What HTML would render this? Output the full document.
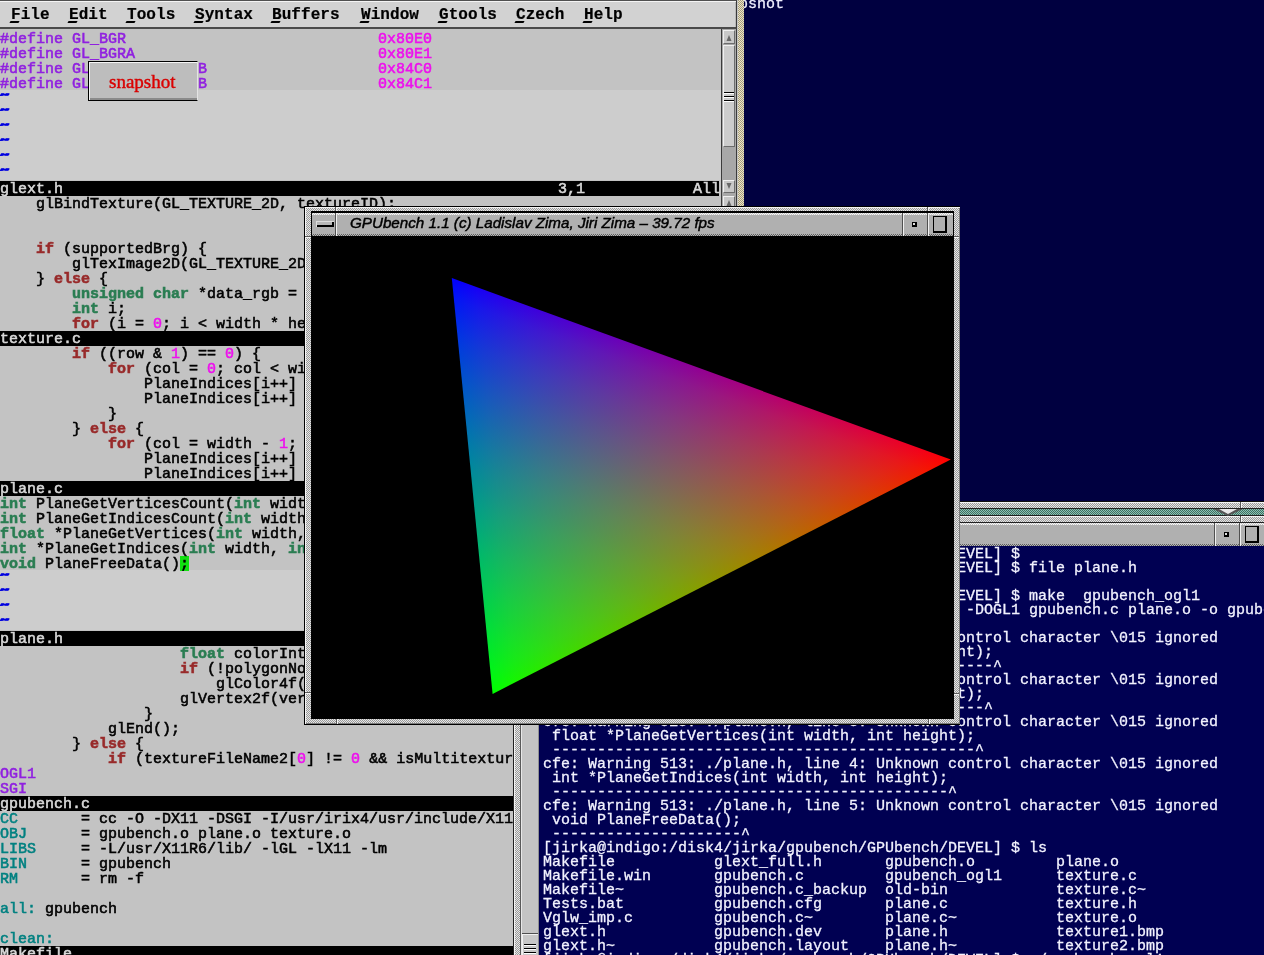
<!DOCTYPE html>
<html><head><meta charset="utf-8">
<style>
*{margin:0;padding:0;box-sizing:border-box}
html,body{width:1264px;height:955px;overflow:hidden}
body{position:relative;background:#000040;font-family:"Liberation Mono",monospace}
.abs{position:absolute}
/* stipple patterns */
.stg{background:repeating-conic-gradient(#e6e6e6 0 25%,#9a9a9a 0 50%) 0 0/2px 2px}
.stb{background:repeating-conic-gradient(#ece4c4 0 25%,#a49c80 0 50%) 0 0/2px 2px}
.stgr{background:repeating-conic-gradient(#8cc0b4 0 25%,#3d7060 0 50%) 0 0/2px 2px}
/* gvim */
#gvim{left:0;top:0;width:744px;height:955px;background:#c3c3c3;overflow:hidden}
#menubar{left:0;top:0;width:737px;height:29px;background:#d2d2d2;border-top:1px solid #505050;box-shadow:inset 0 1px 0 #f4f4f4,inset -1px 0 0 #b8b8b8;border-bottom:2px solid #4a4a4a;border-right:1px solid #3a3a3a}
.mi{position:absolute;top:4px;font:bold 16px/20px "Liberation Mono",monospace;color:#000;white-space:nowrap;-webkit-text-stroke:0.2px #000}
.mi i{display:inline-block;width:9.66px;text-align:center;font-style:normal;position:relative;top:0}
.mi .ul{position:absolute;left:-1px;top:16px;width:9px;height:2px;background:#000;transform:skewX(-30deg)}
.lb{position:absolute;left:0;width:721px;height:15px}
.ln{position:absolute;left:0;height:15px;font:15px/15px "Liberation Mono",monospace;white-space:pre;-webkit-text-stroke:0.55px currentColor}
.sb{position:absolute;left:721px;width:16px;background:#a8a8a8;border-left:1px solid #3c3c3c;border-right:1px solid #3c3c3c}
.btn{position:absolute;left:1px;width:12px;background:#c8c8c8;border-top:1px solid #f0f0f0;border-left:1px solid #f0f0f0;border-bottom:1px solid #6c6c6c;border-right:1px solid #6c6c6c}
.tb{background:repeating-conic-gradient(#f6f6f6 0 25%,#c4c4c4 0 50%) left top/2px 2px repeat-x,repeating-conic-gradient(#5c5c5c 0 25%,#b8b8b8 0 50%) left bottom/2px 2px repeat-x,#b0b0b0}
/* terminal */
#term{left:513px;top:501px;width:760px;height:460px}
.tt{position:absolute;left:543px;top:548px;font:15px/14px "Liberation Mono",monospace;color:#f2f2ff;white-space:pre;-webkit-text-stroke:0.3px currentColor}
</style></head><body>

<!-- desktop text behind -->
<div class="abs" style="left:712px;top:-2px;font:15px/14px 'Liberation Mono';color:#f0f0ff;white-space:pre;-webkit-text-stroke:0.3px currentColor">snapshot</div>

<!-- ================= GVIM ================= -->
<div id="gvim" class="abs">
  <div id="menubar" class="abs">
    <span class="mi" style="left:11px"><i>F</i><i>i</i><i>l</i><i>e</i><b class="ul"></b></span>
    <span class="mi" style="left:69px"><i>E</i><i>d</i><i>i</i><i>t</i><b class="ul"></b></span>
    <span class="mi" style="left:127px"><i>T</i><i>o</i><i>o</i><i>l</i><i>s</i><b class="ul"></b></span>
    <span class="mi" style="left:195px"><i>S</i><i>y</i><i>n</i><i>t</i><i>a</i><i>x</i><b class="ul"></b></span>
    <span class="mi" style="left:272px"><i>B</i><i>u</i><i>f</i><i>f</i><i>e</i><i>r</i><i>s</i><b class="ul"></b></span>
    <span class="mi" style="left:361px"><i>W</i><i>i</i><i>n</i><i>d</i><i>o</i><i>w</i><b class="ul"></b></span>
    <span class="mi" style="left:439px"><i>G</i><i>t</i><i>o</i><i>o</i><i>l</i><i>s</i><b class="ul"></b></span>
    <span class="mi" style="left:516px"><i>C</i><i>z</i><i>e</i><i>c</i><i>h</i><b class="ul"></b></span>
    <span class="mi" style="left:584px"><i>H</i><i>e</i><i>l</i><i>p</i><b class="ul"></b></span>
  </div>
  <div class="abs" style="left:0;top:29px;width:721px;height:1px;background:#c3c3c3"></div>
<div class="lb" style="top:30px;width:721px;background:#c3c3c3"></div>
<div class="lb" style="top:45px;width:721px;background:#c3c3c3"></div>
<div class="lb" style="top:60px;width:721px;background:#c3c3c3"></div>
<div class="lb" style="top:75px;width:721px;background:#c3c3c3"></div>
<div class="lb" style="top:90px;width:721px;background:#cdcdcd"></div>
<div class="lb" style="top:105px;width:721px;background:#cdcdcd"></div>
<div class="lb" style="top:120px;width:721px;background:#cdcdcd"></div>
<div class="lb" style="top:135px;width:721px;background:#cdcdcd"></div>
<div class="lb" style="top:150px;width:721px;background:#cdcdcd"></div>
<div class="lb" style="top:165px;width:721px;background:#cdcdcd"></div>
<div class="lb" style="top:195px;width:721px;background:#c3c3c3"></div>
<div class="lb" style="top:210px;width:721px;background:#c3c3c3"></div>
<div class="lb" style="top:225px;width:721px;background:#c3c3c3"></div>
<div class="lb" style="top:240px;width:721px;background:#c3c3c3"></div>
<div class="lb" style="top:255px;width:721px;background:#c3c3c3"></div>
<div class="lb" style="top:270px;width:721px;background:#c3c3c3"></div>
<div class="lb" style="top:285px;width:721px;background:#c3c3c3"></div>
<div class="lb" style="top:300px;width:721px;background:#c3c3c3"></div>
<div class="lb" style="top:315px;width:721px;background:#c3c3c3"></div>
<div class="lb" style="top:345px;width:721px;background:#c3c3c3"></div>
<div class="lb" style="top:360px;width:721px;background:#c3c3c3"></div>
<div class="lb" style="top:375px;width:721px;background:#c3c3c3"></div>
<div class="lb" style="top:390px;width:721px;background:#c3c3c3"></div>
<div class="lb" style="top:405px;width:721px;background:#c3c3c3"></div>
<div class="lb" style="top:420px;width:721px;background:#c3c3c3"></div>
<div class="lb" style="top:435px;width:721px;background:#c3c3c3"></div>
<div class="lb" style="top:450px;width:721px;background:#c3c3c3"></div>
<div class="lb" style="top:465px;width:721px;background:#c3c3c3"></div>
<div class="lb" style="top:495px;width:721px;background:#c3c3c3"></div>
<div class="lb" style="top:510px;width:721px;background:#c3c3c3"></div>
<div class="lb" style="top:525px;width:721px;background:#c3c3c3"></div>
<div class="lb" style="top:540px;width:721px;background:#c3c3c3"></div>
<div class="lb" style="top:555px;width:721px;background:#c3c3c3"></div>
<div class="lb" style="top:570px;width:721px;background:#cdcdcd"></div>
<div class="lb" style="top:585px;width:721px;background:#cdcdcd"></div>
<div class="lb" style="top:600px;width:721px;background:#cdcdcd"></div>
<div class="lb" style="top:615px;width:721px;background:#cdcdcd"></div>
<div class="lb" style="top:645px;width:721px;background:#c3c3c3"></div>
<div class="lb" style="top:660px;width:721px;background:#c3c3c3"></div>
<div class="lb" style="top:675px;width:721px;background:#c3c3c3"></div>
<div class="lb" style="top:690px;width:721px;background:#c3c3c3"></div>
<div class="lb" style="top:705px;width:721px;background:#c3c3c3"></div>
<div class="lb" style="top:720px;width:721px;background:#c3c3c3"></div>
<div class="lb" style="top:735px;width:721px;background:#c3c3c3"></div>
<div class="lb" style="top:750px;width:721px;background:#c3c3c3"></div>
<div class="lb" style="top:765px;width:721px;background:#c3c3c3"></div>
<div class="lb" style="top:780px;width:721px;background:#c3c3c3"></div>
<div class="lb" style="top:810px;width:721px;background:#c3c3c3"></div>
<div class="lb" style="top:825px;width:721px;background:#c3c3c3"></div>
<div class="lb" style="top:840px;width:721px;background:#c3c3c3"></div>
<div class="lb" style="top:855px;width:721px;background:#c3c3c3"></div>
<div class="lb" style="top:870px;width:721px;background:#c3c3c3"></div>
<div class="lb" style="top:885px;width:721px;background:#c3c3c3"></div>
<div class="lb" style="top:900px;width:721px;background:#c3c3c3"></div>
<div class="lb" style="top:915px;width:721px;background:#c3c3c3"></div>
<div class="lb" style="top:930px;width:721px;background:#c3c3c3"></div>
<div class="abs" style="left:180px;top:556px;width:9px;height:15px;background:#11e011"></div>
<div class="lb" style="top:181px;width:719px;background:#000000"></div>
<div class="lb" style="top:331px;width:719px;background:#000000"></div>
<div class="lb" style="top:481px;width:719px;background:#000000"></div>
<div class="lb" style="top:631px;width:719px;background:#000000"></div>
<div class="lb" style="top:796px;width:719px;background:#000000"></div>
<div class="lb" style="top:946px;width:719px;background:#000000"></div>
<div class="ln" style="top:32px;color:#000"><span style="color:#9020e0">#define GL_BGR</span>                            <span style="color:#ee10ee">0x80E0</span></div>
<div class="ln" style="top:47px;color:#000"><span style="color:#9020e0">#define GL_BGRA</span>                           <span style="color:#ee10ee">0x80E1</span></div>
<div class="ln" style="top:62px;color:#000"><span style="color:#9020e0">#define GL_TEXTURE0_ARB</span>                   <span style="color:#ee10ee">0x84C0</span></div>
<div class="ln" style="top:77px;color:#000"><span style="color:#9020e0">#define GL_TEXTURE1_ARB</span>                   <span style="color:#ee10ee">0x84C1</span></div>
<svg width="10" height="15" style="position:absolute;left:0;top:90px"><path d="M0.5 5.5 L1.5 3.8 L4 3.8 L5 4.8 L6 3.8 L9 3.8 L8 5.2 L5 5.2 L4 4.4 L3 5.2 Z" fill="#0000e0" stroke="#0000e0" stroke-width="1.2" stroke-linejoin="round"/></svg>
<svg width="10" height="15" style="position:absolute;left:0;top:105px"><path d="M0.5 5.5 L1.5 3.8 L4 3.8 L5 4.8 L6 3.8 L9 3.8 L8 5.2 L5 5.2 L4 4.4 L3 5.2 Z" fill="#0000e0" stroke="#0000e0" stroke-width="1.2" stroke-linejoin="round"/></svg>
<svg width="10" height="15" style="position:absolute;left:0;top:120px"><path d="M0.5 5.5 L1.5 3.8 L4 3.8 L5 4.8 L6 3.8 L9 3.8 L8 5.2 L5 5.2 L4 4.4 L3 5.2 Z" fill="#0000e0" stroke="#0000e0" stroke-width="1.2" stroke-linejoin="round"/></svg>
<svg width="10" height="15" style="position:absolute;left:0;top:135px"><path d="M0.5 5.5 L1.5 3.8 L4 3.8 L5 4.8 L6 3.8 L9 3.8 L8 5.2 L5 5.2 L4 4.4 L3 5.2 Z" fill="#0000e0" stroke="#0000e0" stroke-width="1.2" stroke-linejoin="round"/></svg>
<svg width="10" height="15" style="position:absolute;left:0;top:150px"><path d="M0.5 5.5 L1.5 3.8 L4 3.8 L5 4.8 L6 3.8 L9 3.8 L8 5.2 L5 5.2 L4 4.4 L3 5.2 Z" fill="#0000e0" stroke="#0000e0" stroke-width="1.2" stroke-linejoin="round"/></svg>
<svg width="10" height="15" style="position:absolute;left:0;top:165px"><path d="M0.5 5.5 L1.5 3.8 L4 3.8 L5 4.8 L6 3.8 L9 3.8 L8 5.2 L5 5.2 L4 4.4 L3 5.2 Z" fill="#0000e0" stroke="#0000e0" stroke-width="1.2" stroke-linejoin="round"/></svg>
<div class="ln" style="top:182px;color:#d8d8d8">glext.h                                                       3,1            All</div>
<div class="ln" style="top:197px;color:#000">    glBindTexture(GL_TEXTURE_2D, textureID);</div>
<div class="ln" style="top:242px;color:#000">    <span style="color:#982a2a;font-weight:bold">if</span> (supportedBrg) {</div>
<div class="ln" style="top:257px;color:#000">        glTexImage2D(GL_TEXTURE_2D, <span style="color:#ee10ee">0</span>, GL_RGB</div>
<div class="ln" style="top:272px;color:#000">    } <span style="color:#982a2a;font-weight:bold">else</span> {</div>
<div class="ln" style="top:287px;color:#000">        <span style="color:#2a7d52;font-weight:bold">unsigned</span> <span style="color:#2a7d52;font-weight:bold">char</span> *data_rgb = malloc</div>
<div class="ln" style="top:302px;color:#000">        <span style="color:#2a7d52;font-weight:bold">int</span> i;</div>
<div class="ln" style="top:317px;color:#000">        <span style="color:#982a2a;font-weight:bold">for</span> (i = <span style="color:#ee10ee">0</span>; i &lt; width * height</div>
<div class="ln" style="top:332px;color:#d8d8d8">texture.c</div>
<div class="ln" style="top:347px;color:#000">        <span style="color:#982a2a;font-weight:bold">if</span> ((row &amp; <span style="color:#ee10ee">1</span>) == <span style="color:#ee10ee">0</span>) {</div>
<div class="ln" style="top:362px;color:#000">            <span style="color:#982a2a;font-weight:bold">for</span> (col = <span style="color:#ee10ee">0</span>; col &lt; width</div>
<div class="ln" style="top:377px;color:#000">                PlaneIndices[i++] = </div>
<div class="ln" style="top:392px;color:#000">                PlaneIndices[i++] = </div>
<div class="ln" style="top:407px;color:#000">            }</div>
<div class="ln" style="top:422px;color:#000">        } <span style="color:#982a2a;font-weight:bold">else</span> {</div>
<div class="ln" style="top:437px;color:#000">            <span style="color:#982a2a;font-weight:bold">for</span> (col = width - <span style="color:#ee10ee">1</span>; col</div>
<div class="ln" style="top:452px;color:#000">                PlaneIndices[i++] = </div>
<div class="ln" style="top:467px;color:#000">                PlaneIndices[i++] = </div>
<div class="ln" style="top:482px;color:#d8d8d8">plane.c</div>
<div class="ln" style="top:497px;color:#000"><span style="color:#2a7d52;font-weight:bold">int</span> PlaneGetVerticesCount(<span style="color:#2a7d52;font-weight:bold">int</span> width, <span style="color:#2a7d52;font-weight:bold">int</span> height);</div>
<div class="ln" style="top:512px;color:#000"><span style="color:#2a7d52;font-weight:bold">int</span> PlaneGetIndicesCount(<span style="color:#2a7d52;font-weight:bold">int</span> width, <span style="color:#2a7d52;font-weight:bold">int</span> height);</div>
<div class="ln" style="top:527px;color:#000"><span style="color:#2a7d52;font-weight:bold">float</span> *PlaneGetVertices(<span style="color:#2a7d52;font-weight:bold">int</span> width, <span style="color:#2a7d52;font-weight:bold">int</span> height);</div>
<div class="ln" style="top:542px;color:#000"><span style="color:#2a7d52;font-weight:bold">int</span> *PlaneGetIndices(<span style="color:#2a7d52;font-weight:bold">int</span> width, <span style="color:#2a7d52;font-weight:bold">int</span> height);</div>
<div class="ln" style="top:557px;color:#000"><span style="color:#2a7d52;font-weight:bold">void</span> PlaneFreeData();</div>
<svg width="10" height="15" style="position:absolute;left:0;top:570px"><path d="M0.5 5.5 L1.5 3.8 L4 3.8 L5 4.8 L6 3.8 L9 3.8 L8 5.2 L5 5.2 L4 4.4 L3 5.2 Z" fill="#0000e0" stroke="#0000e0" stroke-width="1.2" stroke-linejoin="round"/></svg>
<svg width="10" height="15" style="position:absolute;left:0;top:585px"><path d="M0.5 5.5 L1.5 3.8 L4 3.8 L5 4.8 L6 3.8 L9 3.8 L8 5.2 L5 5.2 L4 4.4 L3 5.2 Z" fill="#0000e0" stroke="#0000e0" stroke-width="1.2" stroke-linejoin="round"/></svg>
<svg width="10" height="15" style="position:absolute;left:0;top:600px"><path d="M0.5 5.5 L1.5 3.8 L4 3.8 L5 4.8 L6 3.8 L9 3.8 L8 5.2 L5 5.2 L4 4.4 L3 5.2 Z" fill="#0000e0" stroke="#0000e0" stroke-width="1.2" stroke-linejoin="round"/></svg>
<svg width="10" height="15" style="position:absolute;left:0;top:615px"><path d="M0.5 5.5 L1.5 3.8 L4 3.8 L5 4.8 L6 3.8 L9 3.8 L8 5.2 L5 5.2 L4 4.4 L3 5.2 Z" fill="#0000e0" stroke="#0000e0" stroke-width="1.2" stroke-linejoin="round"/></svg>
<div class="ln" style="top:632px;color:#d8d8d8">plane.h</div>
<div class="ln" style="top:647px;color:#000">                    <span style="color:#2a7d52;font-weight:bold">float</span> colorIntensity</div>
<div class="ln" style="top:662px;color:#000">                    <span style="color:#982a2a;font-weight:bold">if</span> (!polygonNormals</div>
<div class="ln" style="top:677px;color:#000">                        glColor4f(colorIntensity</div>
<div class="ln" style="top:692px;color:#000">                    glVertex2f(vertices</div>
<div class="ln" style="top:707px;color:#000">                }</div>
<div class="ln" style="top:722px;color:#000">            glEnd();</div>
<div class="ln" style="top:737px;color:#000">        } <span style="color:#982a2a;font-weight:bold">else</span> {</div>
<div class="ln" style="top:752px;color:#000">            <span style="color:#982a2a;font-weight:bold">if</span> (textureFileName2[<span style="color:#ee10ee">0</span>] != <span style="color:#ee10ee">0</span> &amp;&amp; isMultitexturing</div>
<div class="ln" style="top:767px;color:#000"><span style="color:#9020e0">OGL1</span></div>
<div class="ln" style="top:782px;color:#000"><span style="color:#9020e0">SGI</span></div>
<div class="ln" style="top:797px;color:#d8d8d8">gpubench.c</div>
<div class="ln" style="top:812px;color:#000"><span style="color:#008080">CC</span>       = cc -O -DX11 -DSGI -I/usr/irix4/usr/include/X11</div>
<div class="ln" style="top:827px;color:#000"><span style="color:#008080">OBJ</span>      = gpubench.o plane.o texture.o</div>
<div class="ln" style="top:842px;color:#000"><span style="color:#008080">LIBS</span>     = -L/usr/X11R6/lib/ -lGL -lX11 -lm</div>
<div class="ln" style="top:857px;color:#000"><span style="color:#008080">BIN</span>      = gpubench</div>
<div class="ln" style="top:872px;color:#000"><span style="color:#008080">RM</span>       = rm -f</div>
<div class="ln" style="top:902px;color:#000"><span style="color:#008080">all:</span> gpubench</div>
<div class="ln" style="top:932px;color:#000"><span style="color:#008080">clean:</span></div>
<div class="ln" style="top:947px;color:#d8d8d8">Makefile</div>
  <!-- scrollbar glext.h -->
  <div class="sb" style="top:29px;height:167px">
    <div class="btn" style="top:1px;height:14px"><svg width="10" height="12" style="position:absolute;left:0;top:0"><path d="M5 4 L7.5 10 L2.5 10 Z" fill="#686868"/></svg></div>
    <div class="btn" style="top:16px;height:102px;background:#cccccc">
      <div class="abs" style="left:0;top:46px;width:10px;height:1px;background:#000;box-shadow:0 1px 0 #fff"></div>
      <div class="abs" style="left:0;top:50px;width:10px;height:1px;background:#000;box-shadow:0 1px 0 #fff"></div>
      <div class="abs" style="left:0;top:54px;width:10px;height:1px;background:#000;box-shadow:0 1px 0 #fff"></div>
    </div>
    <div class="btn" style="top:151px;height:13px"><svg width="10" height="11" style="position:absolute;left:0;top:0"><path d="M2.5 2 L7.5 2 L5 8 Z" fill="#686868"/></svg></div>
  </div>
  <div class="sb" style="top:195px;height:760px">
    <div class="btn" style="top:1px;height:13px"><svg width="10" height="11" style="position:absolute;left:0;top:0"><path d="M5 3 L7.5 9 L2.5 9 Z" fill="#686868"/></svg></div>
  </div>
  <div class="abs stb" style="left:738px;top:0;width:6px;height:955px"></div>
</div>

<!-- snapshot button -->
<div class="abs" style="left:88px;top:61px;width:110px;height:40px;border:1px solid #000;border-right:1px solid #e4e4e4;background:#bdbdbd;box-shadow:inset 1px 1px 0 #f4f4f4,inset 0 -2px 0 #8a8a8a">
  <div class="abs" style="left:20px;top:8px;font:19px/24px 'Liberation Serif',serif;color:#e00000;-webkit-text-stroke:0.4px #d00000">snapshot</div>
</div>

<!-- ================= TERMINAL ================= -->
<div class="abs" style="left:513px;top:501px;width:751px;height:454px;background:#000046">
  <div class="abs" style="left:0;top:0;width:751px;height:1px;background:#101010"></div>
  <div class="abs stg" style="left:0;top:1px;width:751px;height:6px;box-shadow:inset 0 1px 0 #f4f4f4"></div>
  <div class="abs" style="left:0;top:7px;width:751px;height:1px;background:#202020"></div>
  <div class="abs stgr" style="left:0;top:8px;width:751px;height:6px"></div>
  <div class="abs" style="left:0;top:14px;width:751px;height:1px;background:#202020"></div>
  <div class="abs stg" style="left:0;top:15px;width:751px;height:6px;box-shadow:inset 0 1px 0 #f4f4f4"></div>
  <div class="abs" style="left:0;top:21px;width:751px;height:1px;background:#202020"></div>
  <div class="abs" style="left:727px;top:1px;width:1px;height:6px;background:#5a5a5a;box-shadow:1px 0 0 #f4f4f4"></div>
  <div class="abs" style="left:727px;top:15px;width:1px;height:6px;background:#5a5a5a;box-shadow:1px 0 0 #f4f4f4"></div>
  <!-- resize notch -->
  <svg class="abs" style="left:700px;top:7px" width="30" height="9"><path d="M0 1 L30 1 L15 8 Z" fill="#555"/><path d="M6 1 L24 1 L15 6 Z" fill="#e8e8e8"/></svg>
  <!-- title bar -->
  <div class="abs tb" style="left:8px;top:22px;width:743px;height:23px"></div>
  <div class="abs" style="left:701px;top:22px;width:1px;height:23px;background:#505050"></div>
  <div class="abs" style="left:702px;top:22px;width:1px;height:23px;background:#f0f0f0"></div>
  <div class="abs" style="left:726px;top:22px;width:1px;height:23px;background:#505050"></div>
  <div class="abs" style="left:727px;top:22px;width:1px;height:23px;background:#f0f0f0"></div>
  <div class="abs" style="left:711px;top:31px;width:5px;height:5px;border:1px solid #000;border-right-width:2px;border-bottom-width:2px;background:#e0e0e0"></div>
  <div class="abs" style="left:732px;top:25px;width:14px;height:17px;border:2px solid #000;border-top-width:1px;border-left-width:1px;background:#b0b0b0"></div>
  <!-- left frame -->
  <div class="abs stg" style="left:1px;top:22px;width:7px;height:440px;box-shadow:inset 1px 0 0 #f4f4f4,inset -1px 0 0 #5a5a5a"></div>
  <div class="abs" style="left:0;top:0;width:1px;height:460px;background:#202020"></div>
  <!-- scrollbar -->
  <div class="abs" style="left:8px;top:45px;width:18px;height:420px;background:#c4c4c4;border-left:1px solid #e8e8e8;border-right:1px solid #909090"></div>
  <div class="abs" style="left:9px;top:432px;width:16px;height:30px;background:#c8c8c8;border-top:1px solid #505050;box-shadow:inset 1px 1px 0 #f0f0f0"></div>
  <div class="abs" style="left:11px;top:443px;width:12px;height:1px;background:#000;box-shadow:0 1px 0 #fff"></div>
  <div class="abs" style="left:11px;top:447px;width:12px;height:1px;background:#000;box-shadow:0 1px 0 #fff"></div>
  <div class="abs" style="left:11px;top:451px;width:12px;height:1px;background:#000;box-shadow:0 1px 0 #fff"></div>
  <div class="abs" style="left:26px;top:45px;width:725px;height:420px;background:#000052"></div>
</div>
<div class="tt">[jirka@indigo:/disk4/jirka/gpubench/GPUbench/DEVEL] $
[jirka@indigo:/disk4/jirka/gpubench/GPUbench/DEVEL] $ file plane.h
plane.h:        c program text
[jirka@indigo:/disk4/jirka/gpubench/GPUbench/DEVEL] $ make  gpubench_ogl1
cc -O -DX11 -DSGI -I/usr/irix4/usr/include/X11 -DOGL1 gpubench.c plane.o -o gpubench_ogl1

cfe: Warning 513: ./plane.h, line 1: Unknown control character \015 ignored
 int PlaneGetVerticesCount(int width, int height);
 -------------------------------------------------^
cfe: Warning 513: ./plane.h, line 2: Unknown control character \015 ignored
 int PlaneGetIndicesCount(int width, int height);
 ------------------------------------------------^
cfe: Warning 513: ./plane.h, line 3: Unknown control character \015 ignored
 float *PlaneGetVertices(int width, int height);
 -----------------------------------------------^
cfe: Warning 513: ./plane.h, line 4: Unknown control character \015 ignored
 int *PlaneGetIndices(int width, int height);
 --------------------------------------------^
cfe: Warning 513: ./plane.h, line 5: Unknown control character \015 ignored
 void PlaneFreeData();
 ---------------------^
[jirka@indigo:/disk4/jirka/gpubench/GPUbench/DEVEL] $ ls
Makefile           glext_full.h       gpubench.o         plane.o
Makefile.win       gpubench.c         gpubench_ogl1      texture.c
Makefile~          gpubench.c_backup  old-bin            texture.c~
Tests.bat          gpubench.cfg       plane.c            texture.h
Vglw_imp.c         gpubench.c~        plane.c~           texture.o
glext.h            gpubench.dev       plane.h            texture1.bmp
glext.h~           gpubench.layout    plane.h~           texture2.bmp
[jirka@indigo:/disk4/jirka/gpubench/GPUbench/DEVEL] $ ./gpubench_ogl1</div>

<!-- ================= GPUBENCH ================= -->
<div class="abs" style="left:304px;top:206px;width:656px;height:519px;background:#000;border-right:0">
  <div class="abs stg" style="left:1px;top:1px;width:655px;height:517px;box-shadow:inset 1px 1px 0 #f4f4f4,inset -1px -1px 0 #7a7a7a"></div>
  <div class="abs" style="left:31px;top:1px;width:1px;height:5px;background:#5a5a5a;box-shadow:1px 0 0 #f4f4f4"></div>
  <div class="abs" style="left:623px;top:1px;width:1px;height:5px;background:#5a5a5a;box-shadow:1px 0 0 #f4f4f4"></div>
  <div class="abs" style="left:1px;top:30px;width:6px;height:1px;background:#5a5a5a;box-shadow:0 1px 0 #f4f4f4"></div>
  <div class="abs" style="left:649px;top:30px;width:6px;height:1px;background:#5a5a5a;box-shadow:0 1px 0 #f4f4f4"></div>
  <div class="abs" style="left:32px;top:512px;width:1px;height:6px;background:#5a5a5a;box-shadow:1px 0 0 #f4f4f4"></div>
  <div class="abs" style="left:624px;top:512px;width:1px;height:6px;background:#5a5a5a;box-shadow:1px 0 0 #f4f4f4"></div>
  <div class="abs" style="left:1px;top:486px;width:6px;height:1px;background:#5a5a5a;box-shadow:0 1px 0 #f4f4f4"></div>
  <div class="abs" style="left:649px;top:487px;width:6px;height:1px;background:#5a5a5a;box-shadow:0 1px 0 #f4f4f4"></div>
  <!-- title bar -->
  <div class="abs" style="left:7px;top:5px;width:643px;height:508px;background:#000"></div>
  <div class="abs tb" style="left:8px;top:7px;width:641px;height:23px"></div>
  <div class="abs" style="left:31px;top:7px;width:1px;height:23px;background:#505050"></div>
  <div class="abs" style="left:32px;top:7px;width:1px;height:23px;background:#f0f0f0"></div>
  <div class="abs" style="left:12px;top:15px;width:18px;height:6px;background:#000;box-shadow:inset 1px 1px 0 #ddd"></div>
  <div class="abs" style="left:13px;top:16px;width:15px;height:3px;background:#b8b8b8"></div>
  <div class="abs" style="left:46px;top:6.5px;font:italic 15.2px/19px 'Liberation Sans',sans-serif;color:#000;white-space:pre;-webkit-text-stroke:0.45px #000">GPUbench 1.1 (c) Ladislav Zima, Jiri Zima – 39.72 fps</div>
  <div class="abs" style="left:598px;top:7px;width:1px;height:23px;background:#505050"></div>
  <div class="abs" style="left:599px;top:7px;width:1px;height:23px;background:#f0f0f0"></div>
  <div class="abs" style="left:623px;top:7px;width:1px;height:23px;background:#505050"></div>
  <div class="abs" style="left:624px;top:7px;width:1px;height:23px;background:#f0f0f0"></div>
  <div class="abs" style="left:608px;top:16px;width:5px;height:5px;border:1px solid #000;border-right-width:2px;border-bottom-width:2px;background:#e0e0e0"></div>
  <div class="abs" style="left:629px;top:10px;width:14px;height:17px;border:2px solid #000;border-top-width:1px;border-left-width:1px;background:#b0b0b0"></div>
  <!-- client -->
  <div class="abs" style="left:8px;top:30px;width:641px;height:482px;background:#000">
    <svg width="641" height="482" style="position:absolute;left:0;top:0">
      <defs>
        <linearGradient id="gb" gradientUnits="userSpaceOnUse" x1="139.80" y1="42.00" x2="316.93" y2="388.26"><stop offset="0.00" stop-color="rgb(0,0,255)"/><stop offset="0.05" stop-color="rgb(0,0,245)"/><stop offset="0.10" stop-color="rgb(0,0,234)"/><stop offset="0.15" stop-color="rgb(0,0,224)"/><stop offset="0.20" stop-color="rgb(0,0,213)"/><stop offset="0.25" stop-color="rgb(0,0,203)"/><stop offset="0.30" stop-color="rgb(0,0,192)"/><stop offset="0.35" stop-color="rgb(0,0,181)"/><stop offset="0.40" stop-color="rgb(0,0,169)"/><stop offset="0.45" stop-color="rgb(0,0,158)"/><stop offset="0.50" stop-color="rgb(0,0,146)"/><stop offset="0.55" stop-color="rgb(0,0,135)"/><stop offset="0.60" stop-color="rgb(0,0,123)"/><stop offset="0.65" stop-color="rgb(0,0,110)"/><stop offset="0.70" stop-color="rgb(0,0,97)"/><stop offset="0.75" stop-color="rgb(0,0,84)"/><stop offset="0.80" stop-color="rgb(0,0,70)"/><stop offset="0.85" stop-color="rgb(0,0,56)"/><stop offset="0.90" stop-color="rgb(0,0,40)"/><stop offset="0.95" stop-color="rgb(0,0,23)"/><stop offset="1.00" stop-color="rgb(0,0,0)"/></linearGradient>
<linearGradient id="gr" gradientUnits="userSpaceOnUse" x1="638.80" y1="223.60" x2="162.20" y2="270.34"><stop offset="0.00" stop-color="rgb(255,0,0)"/><stop offset="0.05" stop-color="rgb(245,0,0)"/><stop offset="0.10" stop-color="rgb(234,0,0)"/><stop offset="0.15" stop-color="rgb(224,0,0)"/><stop offset="0.20" stop-color="rgb(213,0,0)"/><stop offset="0.25" stop-color="rgb(203,0,0)"/><stop offset="0.30" stop-color="rgb(192,0,0)"/><stop offset="0.35" stop-color="rgb(181,0,0)"/><stop offset="0.40" stop-color="rgb(169,0,0)"/><stop offset="0.45" stop-color="rgb(158,0,0)"/><stop offset="0.50" stop-color="rgb(146,0,0)"/><stop offset="0.55" stop-color="rgb(135,0,0)"/><stop offset="0.60" stop-color="rgb(123,0,0)"/><stop offset="0.65" stop-color="rgb(110,0,0)"/><stop offset="0.70" stop-color="rgb(97,0,0)"/><stop offset="0.75" stop-color="rgb(84,0,0)"/><stop offset="0.80" stop-color="rgb(70,0,0)"/><stop offset="0.85" stop-color="rgb(56,0,0)"/><stop offset="0.90" stop-color="rgb(40,0,0)"/><stop offset="0.95" stop-color="rgb(23,0,0)"/><stop offset="1.00" stop-color="rgb(0,0,0)"/></linearGradient>
<linearGradient id="gg" gradientUnits="userSpaceOnUse" x1="180.60" y1="458.00" x2="309.52" y2="103.76"><stop offset="0.00" stop-color="rgb(0,255,0)"/><stop offset="0.05" stop-color="rgb(0,245,0)"/><stop offset="0.10" stop-color="rgb(0,234,0)"/><stop offset="0.15" stop-color="rgb(0,224,0)"/><stop offset="0.20" stop-color="rgb(0,213,0)"/><stop offset="0.25" stop-color="rgb(0,203,0)"/><stop offset="0.30" stop-color="rgb(0,192,0)"/><stop offset="0.35" stop-color="rgb(0,181,0)"/><stop offset="0.40" stop-color="rgb(0,169,0)"/><stop offset="0.45" stop-color="rgb(0,158,0)"/><stop offset="0.50" stop-color="rgb(0,146,0)"/><stop offset="0.55" stop-color="rgb(0,135,0)"/><stop offset="0.60" stop-color="rgb(0,123,0)"/><stop offset="0.65" stop-color="rgb(0,110,0)"/><stop offset="0.70" stop-color="rgb(0,97,0)"/><stop offset="0.75" stop-color="rgb(0,84,0)"/><stop offset="0.80" stop-color="rgb(0,70,0)"/><stop offset="0.85" stop-color="rgb(0,56,0)"/><stop offset="0.90" stop-color="rgb(0,40,0)"/><stop offset="0.95" stop-color="rgb(0,23,0)"/><stop offset="1.00" stop-color="rgb(0,0,0)"/></linearGradient>
      </defs>
      <polygon points="139.80,42.00 638.80,223.60 180.60,458.00" fill="url(#gb)" style="mix-blend-mode:screen"/>
<polygon points="139.80,42.00 638.80,223.60 180.60,458.00" fill="url(#gr)" style="mix-blend-mode:screen"/>
<polygon points="139.80,42.00 638.80,223.60 180.60,458.00" fill="url(#gg)" style="mix-blend-mode:screen"/>
    </svg>
  </div>
</div>
</body></html>
